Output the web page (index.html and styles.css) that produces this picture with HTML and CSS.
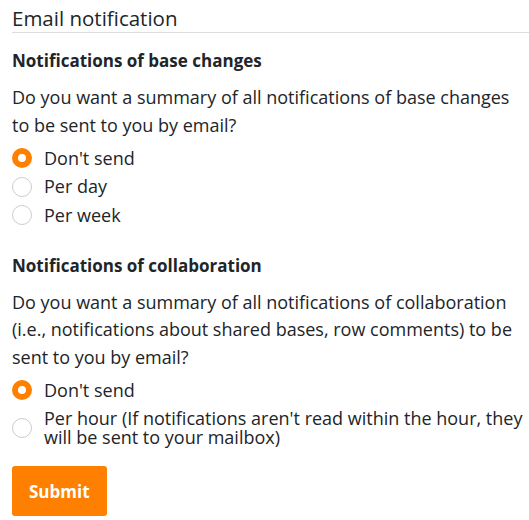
FILE: index.html
```html
<!DOCTYPE html>
<html lang="en">
<head>
    <meta charset="UTF-8">
    <title>Email notification</title>
    <link rel="stylesheet" href="styles.css">
</head>
<body>
    <div class="setting">
        <h3 class="setting-title">Email notification</h3>

        <div class="group">
            <h4 class="group-title">Notifications of base changes</h4>
            <p class="group-desc">Do you want a summary of all notifications of base changes to be sent to you by email?</p>
            <label class="option"><span class="radio checked"></span><span class="option-text">Don't send</span></label>
            <label class="option"><span class="radio"></span><span class="option-text">Per day</span></label>
            <label class="option"><span class="radio"></span><span class="option-text">Per week</span></label>
        </div>

        <div class="group">
            <h4 class="group-title">Notifications of collaboration</h4>
            <p class="group-desc">Do you want a summary of all notifications of collaboration (i.e., notifications about shared bases, row comments) to be sent to you by email?</p>
            <label class="option"><span class="radio checked"></span><span class="option-text">Don't send</span></label>
            <label class="option"><span class="radio"></span><span class="option-text">Per hour (If notifications aren't read within the hour, they will be sent to your mailbox)</span></label>
        </div>

        <button class="submit">Submit</button>
    </div>
</body>
</html>
```

FILE: styles.css
```css
body {
    margin: 0;
    padding: 0 0 0 12px;
    font-family: 'Open Sans', sans-serif;
    color: #212529;
    background: #fff;
}
.setting-title {
    margin: 0;
    padding: 5px 0 1px;
    font-size: 20.5px;
    font-weight: 400;
    line-height: 26px;
    border-bottom: 1px solid #ddd;
}
.group {
    margin-top: 16px;
}
.group + .group {
    margin-top: 24px;
}
.group-title {
    margin: 0 0 11px;
    font-size: 17px;
    font-weight: 700;
    line-height: 24px;
}
.group-desc {
    margin: 0 0 5px;
    font-size: 18px;
    line-height: 27.5px;
    padding-right: 6px;
}
.option {
    display: flex;
    align-items: center;
    gap: 12px;
    font-size: 18px;
    line-height: 19px;
    padding: 4.25px 0;
}
.radio {
    flex: none;
    width: 20px;
    height: 20px;
    box-sizing: border-box;
    border: 1px solid #ccc;
    border-radius: 50%;
}
.radio.checked {
    border: 6px solid #ff8000;
}
.option-text {
    padding-right: 6px;
}
.submit {
    margin-top: 15px;
    padding: 0 17px;
    height: 50px;
    border: none;
    border-radius: 3px;
    background: #ff8000;
    color: #fff;
    font-family: 'Open Sans', sans-serif;
    font-size: 17px;
    font-weight: 700;
}
```
